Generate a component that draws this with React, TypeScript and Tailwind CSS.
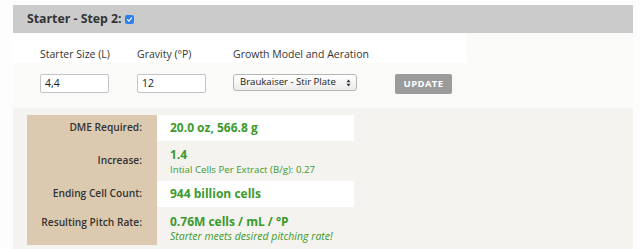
const FONT = "font-['Open_Sans',_'Liberation_Sans',_sans-serif]";

type Row = {
  label: string;
  value: string;
  sub?: string;
  italic?: boolean;
  white?: boolean;
  h: string;
};

const ROWS: Row[] = [
  { label: "DME Required:", value: "20.0 oz, 566.8 g", white: true, h: "h-[26px]" },
  { label: "Increase:", value: "1.4", sub: "Intial Cells Per Extract (B/g): 0.27", h: "h-[40px]" },
  { label: "Ending Cell Count:", value: "944 billion cells", white: true, h: "h-[26px]" },
  {
    label: "Resulting Pitch Rate:",
    value: "0.76M cells / mL / °P",
    sub: "Starter meets desired pitching rate!",
    italic: true,
    h: "h-[38px]",
  },
];

function CheckBox() {
  return (
    <span className="ml-[3px] flex h-[9px] w-[9px] items-center justify-center rounded-[2px] bg-[#2f7ff0]">
      <svg viewBox="0 0 10 10" className="h-[7px] w-[7px]" aria-hidden="true">
        <path d="M2 5.2 L4.2 7.4 L8 2.6" fill="none" stroke="white" strokeWidth="1.6" strokeLinecap="round" strokeLinejoin="round" />
      </svg>
    </span>
  );
}

function TextBox({ value }: { value: string }) {
  return (
    <div className="flex h-[19px] w-[69px] items-center rounded-[2px] border border-[#c4c4c4] bg-white pl-[4px] text-[10.5px] text-[#222]">
      {value}
    </div>
  );
}

export default function App() {
  return (
    <div className={`h-[249px] w-[640px] overflow-hidden bg-[#fdfdfd] pl-[13px] pr-[7px] pt-[5px] ${FONT}`}>
      <div className="flex h-[28px] items-center bg-[#cbcbcb] pl-[14px] pt-[1px]">
        <span className="text-[12.3px] font-bold text-[#333]">Starter - Step 2:</span>
        <CheckBox />
      </div>

      <div className="h-[75px] bg-[#fafaf9]">
        <div className="grid h-[30px] w-[453px] grid-cols-[97px_96px_162px] items-end bg-white pl-[27px] text-[10.5px] text-[#333]">
          <span>Starter Size (L)</span>
          <span>Gravity (°P)</span>
          <span>Growth Model and Aeration</span>
        </div>
        <div className="mt-[11px] grid grid-cols-[97px_96px_162px_auto] items-start pl-[27px]">
          <TextBox value="4,4" />
          <TextBox value="12" />
          <div className="flex h-[17px] w-[124px] items-center justify-between rounded-[3px] border border-[#b5b5b5] bg-gradient-to-b from-white to-[#ececec] pl-[6px] pr-[5px] text-[9.6px] text-[#222]">
            <span>Braukaiser - Stir Plate</span>
            <svg viewBox="0 0 6 10" className="h-[8px] w-[5px]" aria-hidden="true">
              <path d="M3 0.5 L5.5 4 L0.5 4 Z M3 9.5 L5.5 6 L0.5 6 Z" fill="#333" />
            </svg>
          </div>
          <button className="flex h-[20px] w-[57px] items-center justify-center rounded-[2px] bg-[#9b9b9b] text-[9.5px] font-bold tracking-[0.04em] text-white">
            UPDATE
          </button>
        </div>
      </div>

      <div className="h-[150px] bg-[#f4f3f0] pl-[14px] pt-[7px]">
        <div className="w-[327px]">
          {ROWS.map((row) => (
            <div key={row.label} className={`flex ${row.h}`}>
              <div
                className={`flex w-[130px] justify-end bg-[#dccab0] pr-[15px] text-[10.2px] font-semibold text-[#333] ${
                  row.italic ? "items-start pt-[8px]" : "items-center"
                }`}
              >
                {row.label}
              </div>
              <div
                className={`flex w-[197px] flex-col pl-[13px] text-[#3b9a2c] ${
                  row.white ? "bg-white" : ""
                } ${row.italic ? "justify-start pt-[7px]" : "justify-center"}`}
              >
                <span className="text-[12px] font-bold leading-[16px]">{row.value}</span>
                {row.sub && (
                  <span className={`leading-[13px] ${row.italic ? "text-[10.5px] italic" : "text-[9.7px]"}`}>
                    {row.sub}
                  </span>
                )}
              </div>
            </div>
          ))}
        </div>
      </div>
    </div>
  );
}
